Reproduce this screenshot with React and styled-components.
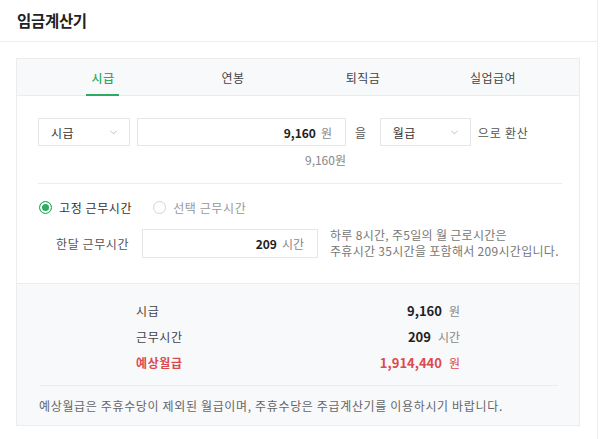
import { Fragment } from 'react';
import styled, { createGlobalStyle } from 'styled-components';
import { ChevronDown } from 'lucide-react';

const GREEN = '#2eaa62';
const RED = '#dc4a4f';

const Global = createGlobalStyle`
  body {
    margin: 0;
    background: #fff;
    font-family: "Noto Sans CJK KR", "Noto Sans", sans-serif;
    color: #333;
    font-size: 12px;
  }
  * { box-sizing: border-box; }
`;

const Page = styled.div`
  width: 598px;
  min-height: 439px;
  border-right: 1px solid #eee;
`;

const Header = styled.header`
  height: 42px;
  display: flex;
  align-items: center;
  padding: 0 0 2px 17px;
  border-bottom: 1px solid #eee;
`;

const Title = styled.h1`
  margin: 0;
  font-size: 15.5px;
  font-weight: 700;
  letter-spacing: -0.3px;
  color: #222;
`;

const Card = styled.section`
  margin: 16px 17px 0 16px;
  border: 1px solid #ececec;
`;

const Tabs = styled.nav`
  display: flex;
  height: 37px;
  padding: 0 21px;
  background: #f8f9fb;
  border-bottom: 1px solid #ececec;
`;

const Tab = styled.div`
  flex: 1;
  display: flex;
  justify-content: center;
  align-items: center;
  position: relative;
  font-size: 12px;
  letter-spacing: 0.4px;
  color: ${p => (p.$active ? GREEN : '#444')};
  font-weight: ${p => (p.$active ? 500 : 400)};

  &::after {
    content: '';
    display: ${p => (p.$active ? 'block' : 'none')};
    position: absolute;
    bottom: -1px;
    left: 50%;
    width: 33px;
    margin-left: -17px;
    height: 2px;
    background: ${GREEN};
  }
`;

const Body = styled.div`
  padding: 22px 17px 24px 21px;
`;

const Row = styled.div`
  display: flex;
  align-items: center;
`;

const Select = styled.div`
  width: ${p => p.$w}px;
  height: 28px;
  border: 1px solid #e6e6e6;
  display: flex;
  align-items: center;
  justify-content: space-between;
  padding: 0 10px 0 12px;
  font-size: 12px;
  letter-spacing: 0.4px;
  color: #333;
  background: #fff;
`;

const Field = styled.div`
  width: ${p => p.$w}px;
  height: ${p => p.$h || 28}px;
  margin-left: ${p => p.$ml || 0}px;
  border: 1px solid #e6e6e6;
  display: flex;
  align-items: center;
  justify-content: flex-end;
  gap: 5px;
  padding: 0 13px 0 10px;
  background: #fff;
`;

const Value = styled.input`
  flex: 1;
  min-width: 0;
  border: 0;
  outline: none;
  background: transparent;
  text-align: right;
  font: inherit;
  font-size: 12px;
  font-weight: 700;
  color: #222;
  padding: 0;
`;

const Unit = styled.span`
  color: #888;
  font-size: 12px;
`;

const Word = styled.span`
  margin: ${p => p.$m};
  color: #555;
  font-size: 12px;
  letter-spacing: 0.8px;
`;

const Converted = styled.div`
  width: 308px;
  margin-top: 6px;
  text-align: right;
  line-height: 16px;
  color: #888;
  font-size: 12px;
`;

const Divider = styled.hr`
  margin: ${p => p.$m};
  border: 0;
  border-top: 1px solid #ececec;
`;

const Radios = styled.div`
  display: flex;
  align-items: center;
  gap: 21px;
  margin-top: 13px;
  padding-left: 1px;
  height: 20px;
`;

const Radio = styled.label`
  display: flex;
  align-items: center;
  gap: 7px;
  font-size: 12px;
  letter-spacing: 0.6px;
  color: ${p => (p.$on ? '#333' : '#999')};

  &::before {
    content: '';
    width: 11px;
    height: 11px;
    border-radius: 50%;
    border: 1px solid ${p => (p.$on ? GREEN : '#d4d4d4')};
    background: ${p => (p.$on ? GREEN : '#fff')};
    box-shadow: ${p => (p.$on ? 'inset 0 0 0 2px #fff' : 'none')};
  }
`;

const HoursRow = styled(Row)`
  margin-top: 10px;
`;

const Label = styled.span`
  width: 104px;
  padding-left: 18px;
  color: #555;
  font-size: 12px;
  letter-spacing: 0.6px;
`;

const Help = styled.p`
  margin: 0 0 0 12px;
  font-size: 12px;
  line-height: 16px;
  color: #777;
  letter-spacing: 0.3px;
  white-space: nowrap;
`;

const Summary = styled.div`
  background: #f8f9fb;
  border-top: 1px solid #ececec;
  padding-top: 13px;
`;

const SumList = styled.dl`
  width: 324px;
  margin: 0 auto;
  display: grid;
  grid-template-columns: 1fr auto;
  grid-auto-rows: 26px;
  align-items: center;
`;

const SumLabel = styled.dt`
  font-size: 12px;
  letter-spacing: 0.6px;
  color: ${p => (p.$hi ? RED : '#444')};
  font-weight: ${p => (p.$hi ? 700 : 400)};
`;

const SumValue = styled.dd`
  margin: 0;
  text-align: right;
  font-size: 13px;
  font-weight: 700;
  color: ${p => (p.$hi ? RED : '#222')};

  span {
    margin-left: 7px;
    font-size: 12px;
    font-weight: 400;
    color: ${p => (p.$hi ? RED : '#888')};
  }
`;

const Note = styled.p`
  margin: 0;
  padding: 10px 20px 9px 22px;
  line-height: 20px;
  font-size: 12px;
  color: #666;
  letter-spacing: 0.65px;
  white-space: nowrap;
`;

const tabs = ['시급', '연봉', '퇴직금', '실업급여'];

const summary = [
  { label: '시급', value: '9,160', unit: '원' },
  { label: '근무시간', value: '209', unit: '시간' },
  { label: '예상월급', value: '1,914,440', unit: '원', hi: true },
];

function Dropdown({ w, children }) {
  return (
    <Select $w={w}>
      {children}
      <ChevronDown size={11} strokeWidth={1.4} color="#a0a0a0" />
    </Select>
  );
}

export default function App() {
  return (
    <Page>
      <Global />
      <Header>
        <Title>임금계산기</Title>
      </Header>
      <Card>
        <Tabs>
          {tabs.map((t, i) => (
            <Tab key={t} $active={i === 0}>{t}</Tab>
          ))}
        </Tabs>
        <Body>
          <Row>
            <Dropdown w={92}>시급</Dropdown>
            <Field $w={209} $ml={7}>
              <Value readOnly value="9,160" />
              <Unit>원</Unit>
            </Field>
            <Word $m="0 13px 0 9px">을</Word>
            <Dropdown w={91}>월급</Dropdown>
            <Word $m="0 0 0 7px">으로 환산</Word>
          </Row>
          <Converted>9,160원</Converted>
          <Divider $m="15px 0 0" />
          <Radios>
            <Radio $on>고정 근무시간</Radio>
            <Radio>선택 근무시간</Radio>
          </Radios>
          <HoursRow>
            <Label>한달 근무시간</Label>
            <Field $w={176} $h={29}>
              <Value readOnly value="209" />
              <Unit>시간</Unit>
            </Field>
            <Help>
              하루 8시간, 주5일의 월 근로시간은<br />
              주휴시간 35시간을 포함해서 209시간입니다.
            </Help>
          </HoursRow>
        </Body>
        <Summary>
          <SumList>
            {summary.map(s => (
              <Fragment key={s.label}>
                <SumLabel $hi={s.hi}>{s.label}</SumLabel>
                <SumValue $hi={s.hi}>
                  {s.value}<span>{s.unit}</span>
                </SumValue>
              </Fragment>
            ))}
          </SumList>
          <Divider $m="10px 21px 0 23px" />
          <Note>예상월급은 주휴수당이 제외된 월급이며, 주휴수당은 주급계산기를 이용하시기 바랍니다.</Note>
        </Summary>
      </Card>
    </Page>
  );
}
